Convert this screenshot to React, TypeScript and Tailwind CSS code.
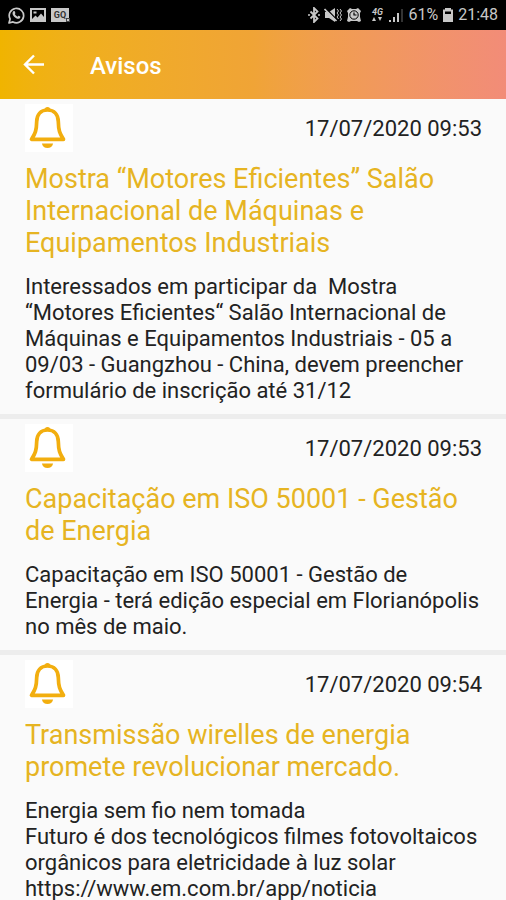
import React from 'react';

interface Notice {
  id: number;
  date: string;
  title: string;
  body: string;
  link?: string;
}

const notices: Notice[] = [
  {
    id: 1,
    date: '17/07/2020 09:53',
    title: 'Mostra “Motores Eficientes” Salão Internacional de Máquinas e Equipamentos Industriais',
    body: 'Interessados em participar da  Mostra “Motores Eficientes“ Salão Internacional de Máquinas e Equipamentos Industriais - 05 a 09/03 - Guangzhou - China, devem preencher formulário de inscrição até 31/12',
  },
  {
    id: 2,
    date: '17/07/2020 09:53',
    title: 'Capacitação em ISO 50001 - Gestão de Energia',
    body: 'Capacitação em ISO 50001 - Gestão de Energia - terá edição especial em Florianópolis no mês de maio.',
  },
  {
    id: 3,
    date: '17/07/2020 09:54',
    title: 'Transmissão wirelles de energia promete revolucionar mercado.',
    body: 'Energia sem fio nem tomada\nFuturo é dos tecnológicos filmes fotovoltaicos orgânicos para eletricidade à luz solar\n',
    link: 'https://www.em.com.br/app/noticia',
  },
];

const BellIcon: React.FC = () => (
  <svg viewBox="1.5 0 48 48" className="h-12 w-12 bg-white" aria-hidden="true">
    <path d="M24 6C17.200 6 13.400 10.500 13.200 17.500C13 26.500 11.800 29.600 8 35.300H40C36.200 29.600 35 26.500 34.800 17.500C34.600 10.500 30.800 6 24 6Z" fill="none" stroke="#f2ae0f" strokeWidth="3.700" strokeLinejoin="round" />
    <path d="M21.200 6.600V5.800a2.800 2.800 0 0 1 5.600 0v.8z" fill="#f2ae0f" />
    <path d="M18.400 39.400h11.200c-.6 3-2.800 4.600-5.600 4.600s-5-1.600-5.600-4.600z" fill="#f2ae0f" />
  </svg>
);

const StatusBar: React.FC = () => (
  <div className="flex h-[30px] shrink-0 items-center justify-between bg-black pl-2 pr-2 text-[#c8c8c8]">
    <div className="flex items-center gap-[5px]">
      {/* WhatsApp */}
      <svg viewBox="0 0 17 17" className="h-[17px] w-[17px]" aria-hidden="true">
        <path d="M1 16l1.1-4A7.2 7.2 0 1 1 5 14.9z" fill="none" stroke="currentColor" strokeWidth="1.7" strokeLinejoin="round" />
        <path d="M5.500 4.300c.5-.4 1.100-.3 1.300.2l.6 1.400c.1.3-.5.9-.6 1.200.6 1.200 1.400 2 2.700 2.600.4-.2.8-1 1.100-.9l1.600.8c.4.3 0 1.600-.7 2-2.900 1.300-7.600-3.300-6.900-5.900.1-.6.500-1.100.900-1.400z" fill="currentColor" />
      </svg>
      {/* Gallery */}
      <svg viewBox="0 0 16 16" className="h-4 w-4" aria-hidden="true">
        <path fillRule="evenodd" d="M0 1h16v14H0zM2 3v9l3.500-3.500 2 2L11 6.500l3 3.500V3zM3.500 4.500h3v2h-3z" fill="currentColor" />
      </svg>
      {/* News app */}
      <div className="relative flex h-[14px] w-[18px] items-center justify-center bg-[#c8c8c8] text-[9px] font-bold leading-none text-[#333]">
        GQ
        <span className="absolute -right-px bottom-0 h-1 w-1 border border-[#444] bg-[#c8c8c8]" />
      </div>
    </div>
    <div className="flex items-center gap-1">
      {/* Bluetooth */}
      <svg viewBox="0 0 12 16" className="h-4 w-3" aria-hidden="true">
        <path d="M2.500 4.500l7 7L6 15V1l3.500 3.500-7 7" fill="none" stroke="currentColor" strokeWidth="1.800" />
        <path d="M0 7.200h2v1.600H0zM10 7.200h2v1.600h-2z" fill="currentColor" />
      </svg>
      {/* Muted, vibrating */}
      <svg viewBox="0 0 18 16" className="h-4 w-[18px]" aria-hidden="true">
        <path d="M1 5h4l6-4v14l-6-4H1z" fill="currentColor" />
        <path d="M1 .5l12 12.500" stroke="#000" strokeWidth="1.500" />
        <path d="M.5 2l12 12" stroke="currentColor" strokeWidth="1.700" />
        <path d="M13 2l1.500 2L13 6l1.500 2L13 10l1.500 2M16 2l1.500 2L16 6l1.500 2L16 10l1.500 2L16 14" fill="none" stroke="currentColor" />
      </svg>
      {/* Alarm */}
      <svg viewBox="0 0 16 16" className="h-4 w-4" aria-hidden="true">
        <path d="M1 4l3-3 2 1h4l2-1 3 3-1 2v4l1 4-2 1-2-1H5l-2 1-2-1 1-4V6z" fill="currentColor" />
        <circle cx="8" cy="8" r="4.200" fill="none" stroke="#000" strokeWidth="1" />
        <path d="M8 5.500V8h2.500" fill="none" stroke="#000" strokeWidth="1.200" />
      </svg>
      <div className="ml-1 flex w-[14px] flex-col items-center">
        <span className="text-[9px] font-bold italic leading-[9px]">4G</span>
        <svg viewBox="0 0 10 5" className="h-[5px] w-[10px]" aria-hidden="true">
          <path d="M0 4l2-4 2 4zM6 0h4L8 4z" fill="currentColor" />
        </svg>
      </div>
      {/* Signal */}
      <svg viewBox="0 0 16 16" className="h-4 w-4" aria-hidden="true">
        <path d="M1 13h2v2H1zM5 10h2v5H5zM9 6h2v9H9z" fill="currentColor" />
        <path d="M13 2h2v13h-2z" fill="#333" />
      </svg>
      <span className="text-base leading-5">61%</span>
      {/* Battery */}
      <svg viewBox="0 0 12 16" className="h-4 w-3" aria-hidden="true">
        <path fillRule="evenodd" d="M3 1h6v1.500h2V15H1V2.500h2zM3 4.500v2.500h6V4.500z" fill="currentColor" />
      </svg>
      <span className="text-base leading-5">21:48</span>
    </div>
  </div>
);

const NoticeItem: React.FC<{ notice: Notice }> = ({ notice }) => (
  <article className="border-b-[5px] border-[#ededed] pb-[10px] pl-[25px] pr-6 pt-[5px]">
    <div className="flex items-center justify-between pb-[11px]">
      <BellIcon />
      <time className="pt-0.5 text-[22px] leading-[26px] text-[#222]">{notice.date}</time>
    </div>
    <h2 className="text-[27px] leading-8 text-[#e6b422]">{notice.title}</h2>
    <p className="mt-[15px] whitespace-pre-wrap text-[22px] leading-[26px] text-[#222]">
      {notice.body}
      {notice.link && <a href={notice.link}>{notice.link}</a>}
    </p>
  </article>
);

const App: React.FC = () => {
  return (
    <div className="flex h-screen flex-col overflow-hidden bg-[#fafafa] font-['Roboto',sans-serif]">
      <StatusBar />
      <header className="flex h-[69px] shrink-0 items-center bg-linear-to-r from-[#f0b400] via-[#f0a436] to-[#f28c78] pl-[22px] text-white">
        <button aria-label="Voltar" className="flex h-6 w-6 items-center justify-center">
          <svg viewBox="0 0 24 24" className="h-6 w-6" aria-hidden="true">
            <path d="M22 11.500H3.500M12 2.500l-9 9 9 9" fill="none" stroke="currentColor" strokeWidth="2.400" />
          </svg>
        </button>
        <h1 className="pl-11 pt-0.5 text-2xl font-medium">Avisos</h1>
      </header>
      <main className="min-h-0 flex-1 overflow-y-auto [scrollbar-width:none]">
        {notices.map(notice => (
          <NoticeItem key={notice.id} notice={notice} />
        ))}
      </main>
    </div>
  );
};

export default App;
